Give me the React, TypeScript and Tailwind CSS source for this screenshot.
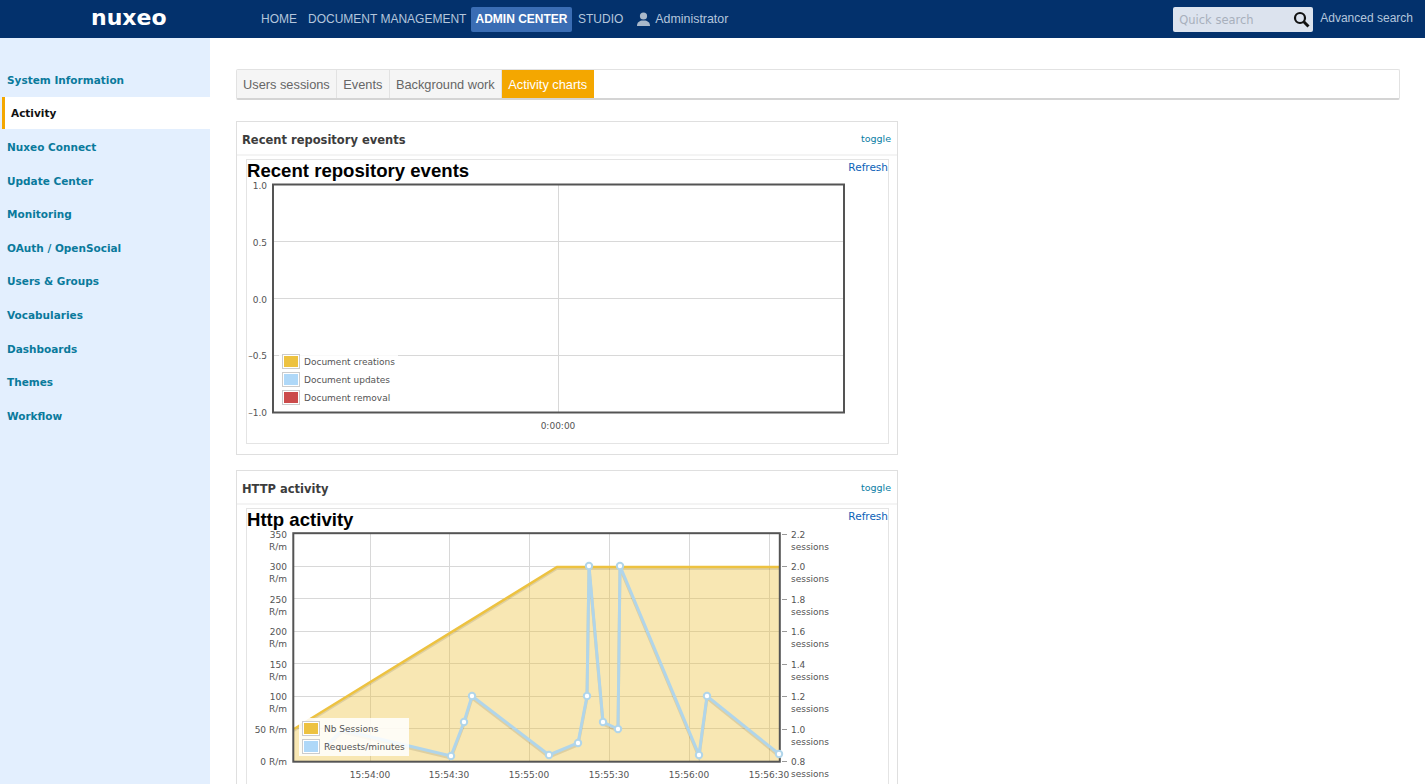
import React from "react";

const sideItems = [
  "System Information",
  "Activity",
  "Nuxeo Connect",
  "Update Center",
  "Monitoring",
  "OAuth / OpenSocial",
  "Users & Groups",
  "Vocabularies",
  "Dashboards",
  "Themes",
  "Workflow",
];

const tabs = ["Users sessions", "Events", "Background work"];

const reqPoints: [number, number][] = [
  [325, 747], [342, 730], [451, 756], [464, 722], [472, 696], [549, 755], [578, 743],
  [587, 696], [589, 566], [603, 722], [618, 729], [620, 566], [699, 755], [707, 696], [779, 754],
];

const leftLabels = [
  { y: 535, a: "350", b: "R/m" },
  { y: 567, a: "300", b: "R/m" },
  { y: 600, a: "250", b: "R/m" },
  { y: 632, a: "200", b: "R/m" },
  { y: 665, a: "150", b: "R/m" },
  { y: 697, a: "100", b: "R/m" },
];

const rightLabels = [
  { y: 534, t: "2.2" },
  { y: 566, t: "2.0" },
  { y: 599, t: "1.8" },
  { y: 631, t: "1.6" },
  { y: 664, t: "1.4" },
  { y: 696, t: "1.2" },
  { y: 729, t: "1.0" },
  { y: 761, t: "0.8" },
];

const timeLabels = [
  { x: 370, t: "15:54:00" },
  { x: 449, t: "15:54:30" },
  { x: 529, t: "15:55:00" },
  { x: 609, t: "15:55:30" },
  { x: 689, t: "15:56:00" },
  { x: 769, t: "15:56:30" },
];

const Swatch = ({ y, color }: { y: number; color: string }) => (
  <g>
    <rect x={282.5} y={y + 0.5} width={17} height={14} fill="#fff" stroke="#ccc" />
    <rect x={284} y={y + 2} width={14} height={11} fill={color} />
  </g>
);

const EventsChart = () => (
  <svg width={641} height={265} viewBox="247 178 641 265" className="block font-['DejaVu_Sans',sans-serif] text-[9px]">
    <g stroke="#d8d8d8">
      <line x1={273} x2={845} y1={241.5} y2={241.5} />
      <line x1={273} x2={845} y1={298.5} y2={298.5} />
      <line x1={273} x2={845} y1={355.5} y2={355.5} />
      <line x1={558.5} x2={558.5} y1={184} y2={413} />
    </g>
    <rect x={273} y={184.5} width={571} height={228} fill="none" stroke="#545454" strokeWidth={2} />
    <g fill="#545454" textAnchor="end">
      <text x={267} y={189}>1.0</text>
      <text x={267} y={246}>0.5</text>
      <text x={267} y={303}>0.0</text>
      <text x={267} y={359}>–0.5</text>
      <text x={267} y={416}>–1.0</text>
    </g>
    <text x={558} y={429} fill="#545454" textAnchor="middle">0:00:00</text>
    <rect x={279} y={352} width={119} height={56} fill="#fff" opacity={0.85} />
    <Swatch y={354} color="#edc240" />
    <Swatch y={372} color="#afd8f8" />
    <Swatch y={390} color="#cb4b4b" />
    <g fill="#545454">
      <text x={304} y={365}>Document creations</text>
      <text x={304} y={383}>Document updates</text>
      <text x={304} y={401}>Document removal</text>
    </g>
  </svg>
);

const HttpChart = () => {
  const line = reqPoints.map((p) => p.join(",")).join(" ");
  return (
    <svg width={641} height={270} viewBox="247 527 641 270" className="block font-['DejaVu_Sans',sans-serif] text-[9px]">
      <g stroke="#d8d8d8">
        {[566, 598, 631, 663, 696, 728].map((y) => (
          <line key={y} x1={293} x2={780} y1={y + 0.5} y2={y + 0.5} />
        ))}
        {[370, 449, 529, 609, 689, 769].map((x) => (
          <line key={x} x1={x + 0.5} x2={x + 0.5} y1={533} y2={762} />
        ))}
      </g>
      <polygon points="294,729 557,567 779,567 779,761 294,761" fill="#edc240" opacity={0.4} />
      <polyline points="294,731 557,569 779,569" fill="none" stroke="#000" strokeOpacity={0.1} strokeWidth={2} />
      <polyline points="294,729 557,567 779,567" fill="none" stroke="#edc240" strokeWidth={2.5} />
      <polyline points={line} transform="translate(0 2)" fill="none" stroke="#000" strokeOpacity={0.1} strokeWidth={3} />
      <polyline points={line} fill="none" stroke="#b0d5ea" strokeWidth={3} />
      <rect x={293.3} y={533.2} width={486.5} height={228.5} fill="none" stroke="#545454" strokeWidth={2} />
      {reqPoints.slice(2).map(([x, y]) => (
        <circle key={`${x}-${y}`} cx={x} cy={y} r={3.2} fill="#fff" stroke="#b0d5ea" strokeWidth={2} />
      ))}
      <rect x={299} y={718} width={110} height={38} fill="#fff" opacity={0.85} />
      <rect x={302.5} y={721.5} width={17} height={14} fill="#fff" stroke="#ccc" />
      <rect x={304} y={723} width={14} height={11} fill="#edc240" />
      <rect x={302.5} y={739.5} width={17} height={14} fill="#fff" stroke="#ccc" />
      <rect x={304} y={741} width={14} height={11} fill="#afd8f8" />
      <g fill="#545454">
        <text x={324} y={732}>Nb Sessions</text>
        <text x={324} y={750}>Requests/minutes</text>
      </g>
      <g fill="#545454" textAnchor="end">
        {leftLabels.map((l) => (
          <g key={l.a}>
            <text x={287} y={l.y + 3}>{l.a}</text>
            <text x={287} y={l.y + 15}>{l.b}</text>
          </g>
        ))}
        <text x={287} y={733}>50 R/m</text>
        <text x={287} y={765}>0 R/m</text>
      </g>
      <g stroke="#999">
        {rightLabels.map((l) => (
          <line key={l.t} x1={782} x2={787} y1={l.y + 0.5} y2={l.y + 0.5} />
        ))}
      </g>
      <g fill="#545454">
        {rightLabels.map((l) => (
          <g key={l.t}>
            <text x={791} y={l.y + 4}>{l.t}</text>
            <text x={791} y={l.y + 16}>sessions</text>
          </g>
        ))}
      </g>
      <g fill="#545454" textAnchor="middle">
        {timeLabels.map((l) => (
          <text key={l.t} x={l.x} y={778}>{l.t}</text>
        ))}
      </g>
    </svg>
  );
};

const Gadget = ({ title, heading, children, className }: { title: string; heading: string; children: React.ReactNode; className: string }) => (
  <div className={`w-[662px] border border-[#dfdfdf] ${className}`}>
    <div className="flex h-[32px] items-center justify-between pl-[5px] pr-[6px] pt-[6px]">
      <span className="font-['DejaVu_Sans',sans-serif] text-[11.5px] font-bold text-[#3c3c3c]">{title}</span>
      <a className="pb-[4px] font-['DejaVu_Sans',sans-serif] text-[9.5px] text-[#0a7ea4]">toggle</a>
    </div>
    <div className="h-[2px] bg-[#f4f4f4]" />
    <div className="mb-[10px] ml-[9px] mr-[8px] mt-[3px] border border-[#e4e4e4]">
      <div className="flex h-[18px] items-start justify-between">
        <span className="h-[18px] text-[18.6px] font-bold leading-[22px] text-black">{heading}</span>
        <a className="font-['DejaVu_Sans',sans-serif] text-[10.5px] leading-[15px] text-[#0b62b8]">Refresh</a>
      </div>
      {children}
    </div>
  </div>
);

export default function App() {
  return (
    <div className="flex h-screen flex-col overflow-hidden bg-white font-['Liberation_Sans',Arial,sans-serif]">
      <header className="flex h-[38px] shrink-0 items-center bg-[#03316c] text-[12px] text-[#b4c6dc]">
        <div className="ml-[91px] w-[170px] pb-[2px] font-['DejaVu_Sans',sans-serif] text-[22px] font-bold leading-none text-white">nuxeo</div>
        <nav className="flex items-center">
          <a>HOME</a>
          <a className="ml-[11px] w-[157px] whitespace-nowrap">DOCUMENT MANAGEMENT</a>
          <a className="ml-[6px] flex h-[25px] w-[101px] items-center justify-center rounded-[2px] bg-[#3a6db4] font-bold text-white">ADMIN CENTER</a>
          <a className="ml-[6px]">STUDIO</a>
          <a className="ml-[14px] flex items-center gap-[5px] text-[12.4px]">
            <svg width="13" height="14" viewBox="0 0 13 14" fill="#a9b8ca">
              <circle cx="6.5" cy="4" r="3.6" />
              <path d="M0 14c0-3.5 2-4.6 4.6-5.4h3.8C11 9.4 13 10.5 13 14z" />
            </svg>
            Administrator
          </a>
        </nav>
        <div className="ml-auto flex items-center">
          <div className="flex h-[25px] w-[140px] items-center justify-between rounded-[2px] bg-[#dce3ee] pl-[6px] pr-[3px]">
            <span className="pt-[3px] font-['DejaVu_Sans',sans-serif] text-[11.5px] text-[#a8b0bc]">Quick search</span>
            <svg width="17" height="17" viewBox="0 0 17 17" fill="none" stroke="#111" strokeWidth="2.2">
              <circle cx="7" cy="7" r="5" />
              <line x1="10.8" y1="10.8" x2="15.5" y2="15.5" strokeWidth="3" />
            </svg>
          </div>
          <a className="ml-[7px] mr-[12px] pb-[2px]">Advanced search</a>
        </div>
      </header>
      <div className="flex min-h-0 flex-1">
        <aside className="w-[210px] shrink-0 bg-[#e3effe] pt-[25px] font-['DejaVu_Sans',sans-serif] text-[10.5px] font-bold text-[#0a7a9c]">
          {sideItems.map((item) =>
            item === "Activity" ? (
              <div key={item} className="mb-[1.6px] ml-[2px] flex h-[32px] items-center border-l-[3px] border-[#f4a700] bg-white pl-[6px] pt-[3px] font-bold text-[#111]">
                {item}
              </div>
            ) : (
              <div key={item} className="flex h-[33.6px] items-center pl-[7px] pt-[2px]">
                {item}
              </div>
            )
          )}
        </aside>
        <main className="min-w-0 flex-1 pl-[26px] pr-[25px] pt-[31px]">
          <div className="flex h-[31px] rounded-[2px] border border-b-2 border-[#e2e2e2] border-b-[#d4d4d4] text-[12.8px] text-[#666]">
            {tabs.map((t) => (
              <div key={t} className="flex items-center border-r border-[#e2e2e2] bg-[#f5f5f5] pl-[6px] pr-[6.5px] pt-[2px]">
                {t}
              </div>
            ))}
            <div className="flex items-center bg-[#f4a700] pl-[6px] pr-[6.5px] pt-[2px] text-white">Activity charts</div>
          </div>
          <Gadget title="Recent repository events" heading="Recent repository events" className="mt-[21px]">
            <EventsChart />
          </Gadget>
          <Gadget title="HTTP activity" heading="Http activity" className="mt-[15px]">
            <HttpChart />
          </Gadget>
        </main>
      </div>
    </div>
  );
}
